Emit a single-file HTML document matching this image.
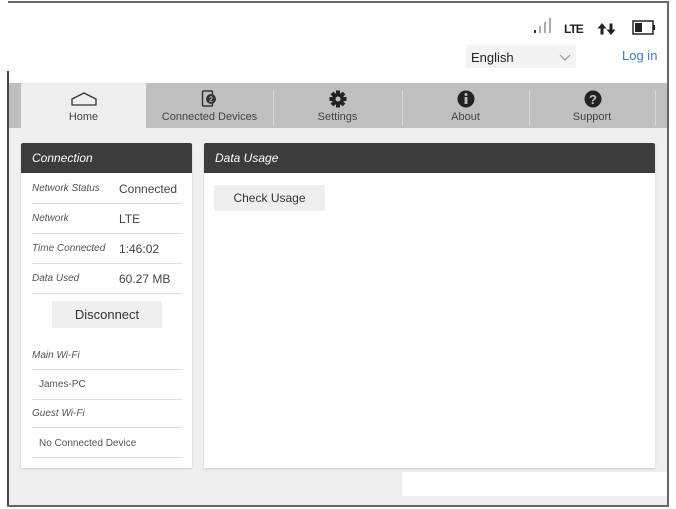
<!DOCTYPE html>
<html><head><meta charset="utf-8"><style>
*{margin:0;padding:0;box-sizing:border-box}
body{width:676px;height:509px;background:#fff;position:relative;overflow:hidden;font-family:"Liberation Sans",Arial,sans-serif;color:#333}
.a{position:absolute}
.t{font-size:12px;color:#444}
.lab{font-size:10px;font-style:italic;color:#555}
.val{font-size:12px;color:#444}
.ln{position:absolute;height:1px;background:#ddd}
</style></head><body>
<div class="a" style="left:8px;top:1px;width:661px;height:2px;background:#666"></div>
<div class="a" style="left:667px;top:1px;width:2px;height:506px;background:#666"></div>
<div class="a" style="left:7px;top:71px;width:2px;height:436px;background:#444"></div>
<div class="a" style="left:7px;top:505px;width:662px;height:2px;background:#666"></div>
<svg class="a" style="left:533px;top:16px" width="20" height="20"><rect x="1" y="14" width="2" height="3" fill="#333"/><rect x="6" y="10" width="2" height="7" fill="#aaa"/><rect x="11" y="6" width="2" height="11" fill="#aaa"/><rect x="16" y="2" width="2" height="15" fill="#aaa"/></svg>
<div class="a" style="left:564px;top:22px;font-size:12px;font-weight:bold;color:#222;letter-spacing:-1px">LTE</div>
<svg class="a" style="left:597px;top:22px" width="20" height="14"><path d="M5 1L0.5 6.5h3v6h3v-6h3z M14 13l4.5-5.5h-3v-6h-3v6h-3z" fill="#222"/></svg>
<svg class="a" style="left:632px;top:20px" width="26" height="16"><rect x="1" y="1" width="20" height="13" fill="none" stroke="#222" stroke-width="1.5"/><rect x="3" y="3" width="7" height="9" fill="#222"/><rect x="21" y="5" width="2" height="5" fill="#222"/></svg>
<div class="a" style="left:466px;top:45px;width:110px;height:23px;background:#f3f3f3"></div>
<div class="a t" style="left:471px;top:50px;font-size:13px;color:#222">English</div>
<svg class="a" style="left:559px;top:54px" width="12" height="8"><path d="M1 1l5 5 5-5" fill="none" stroke="#999" stroke-width="1.2"/></svg>
<div class="a" style="left:622px;top:48px;font-size:13px;color:#3a7bbf">Log in</div>
<div class="a" style="left:9px;top:83px;width:658px;height:45px;background:#bfbfbf"></div>
<div class="a" style="left:21px;top:83px;width:125px;height:45px;background:#eeeeee"></div>
<div class="a" style="left:273px;top:90px;width:1px;height:36px;background:#d8d8d8"></div>
<div class="a" style="left:402px;top:90px;width:1px;height:36px;background:#d8d8d8"></div>
<div class="a" style="left:529px;top:90px;width:1px;height:36px;background:#d8d8d8"></div>
<div class="a" style="left:655px;top:90px;width:1px;height:36px;background:#d8d8d8"></div>
<svg class="a" style="left:71px;top:92px" width="26" height="14"><path d="M1 7L13 1l12 6v6H1z" fill="none" stroke="#333" stroke-width="1.3"/></svg>
<div class="a t" style="left:21px;top:111px;width:125px;text-align:center;font-size:11px">Home</div>
<svg class="a" style="left:201px;top:90px" width="16" height="18"><rect x="1.5" y="1" width="10" height="15" rx="1" fill="none" stroke="#333" stroke-width="1.4"/><circle cx="10" cy="9" r="5" fill="#333"/><text x="10" y="11.5" font-size="7" fill="#fff" text-anchor="middle" font-family="Liberation Sans">2</text></svg>
<div class="a t" style="left:146px;top:111px;width:127px;text-align:center;font-size:11px">Connected Devices</div>
<svg class="a" style="left:329px;top:90px" width="18" height="18" viewBox="0 0 18 18"><g fill="#222"><circle cx="9" cy="9" r="6"/><rect x="7" y="0.5" width="4" height="17"/><rect x="0.5" y="7" width="17" height="4"/><rect x="7" y="0.5" width="4" height="17" transform="rotate(45 9 9)"/><rect x="7" y="0.5" width="4" height="17" transform="rotate(-45 9 9)"/></g><circle cx="9" cy="9" r="2.5" fill="#bfbfbf"/></svg>
<div class="a t" style="left:273px;top:111px;width:129px;text-align:center;font-size:11px">Settings</div>
<svg class="a" style="left:457px;top:90px" width="18" height="18"><circle cx="9" cy="9" r="8.5" fill="#222"/><rect x="7.6" y="7" width="2.8" height="7" fill="#bfbfbf"/><circle cx="9" cy="4.5" r="1.5" fill="#bfbfbf"/></svg>
<div class="a t" style="left:402px;top:111px;width:127px;text-align:center;font-size:11px">About</div>
<svg class="a" style="left:584px;top:90px" width="18" height="18"><circle cx="9" cy="9" r="8.5" fill="#222"/><text x="9" y="14" font-size="13" font-weight="bold" fill="#bfbfbf" text-anchor="middle" font-family="Liberation Sans">?</text></svg>
<div class="a t" style="left:529px;top:111px;width:126px;text-align:center;font-size:11px">Support</div>
<div class="a" style="left:9px;top:128px;width:658px;height:377px;background:#efefef"></div>
<div class="a" style="left:402px;top:472px;width:265px;height:24px;background:#fff"></div>
<div class="a" style="left:21px;top:143px;width:171px;height:325px;background:#fff;box-shadow:0 1px 2px #ccc"></div>
<div class="a" style="left:21px;top:143px;width:171px;height:30px;background:#3c3c3c;border-radius:2px 2px 0 0"></div>
<div class="a" style="left:32px;top:151px;font-size:12px;font-style:italic;color:#fff">Connection</div>
<div class="a" style="left:204px;top:143px;width:451px;height:325px;background:#fff;box-shadow:0 1px 2px #ccc"></div>
<div class="a" style="left:204px;top:143px;width:451px;height:30px;background:#3c3c3c;border-radius:2px 2px 0 0"></div>
<div class="a" style="left:215px;top:151px;font-size:12px;font-style:italic;color:#fff">Data Usage</div>
<div class="a" style="left:214px;top:185px;width:111px;height:26px;background:#efefef"></div>
<div class="a" style="left:214px;top:191px;width:111px;text-align:center;font-size:12px;color:#333">Check Usage</div>
<div class="a lab" style="left:32px;top:183px">Network Status</div><div class="a val" style="left:119px;top:182px">Connected</div>
<div class="ln" style="left:32px;top:203px;width:150px"></div>
<div class="a lab" style="left:32px;top:213px">Network</div><div class="a val" style="left:119px;top:212px">LTE</div>
<div class="ln" style="left:32px;top:233px;width:150px"></div>
<div class="a lab" style="left:32px;top:243px">Time Connected</div><div class="a val" style="left:119px;top:242px">1:46:02</div>
<div class="ln" style="left:32px;top:263px;width:150px"></div>
<div class="a lab" style="left:32px;top:273px">Data Used</div><div class="a val" style="left:119px;top:272px">60.27 MB</div>
<div class="ln" style="left:32px;top:293px;width:150px"></div>
<div class="a" style="left:52px;top:301px;width:110px;height:27px;background:#efefef"></div>
<div class="a" style="left:52px;top:307px;width:110px;text-align:center;font-size:13px;color:#333">Disconnect</div>
<div class="a lab" style="left:32px;top:350px">Main Wi-Fi</div>
<div class="ln" style="left:32px;top:369px;width:150px"></div>
<div class="a" style="left:39px;top:379px;font-size:10px;color:#555">James-PC</div>
<div class="ln" style="left:32px;top:399px;width:150px"></div>
<div class="a lab" style="left:32px;top:408px">Guest Wi-Fi</div>
<div class="ln" style="left:32px;top:427px;width:150px"></div>
<div class="a" style="left:39px;top:438px;font-size:10px;color:#555">No Connected Device</div>
<div class="ln" style="left:32px;top:457px;width:150px"></div>
</body></html>
